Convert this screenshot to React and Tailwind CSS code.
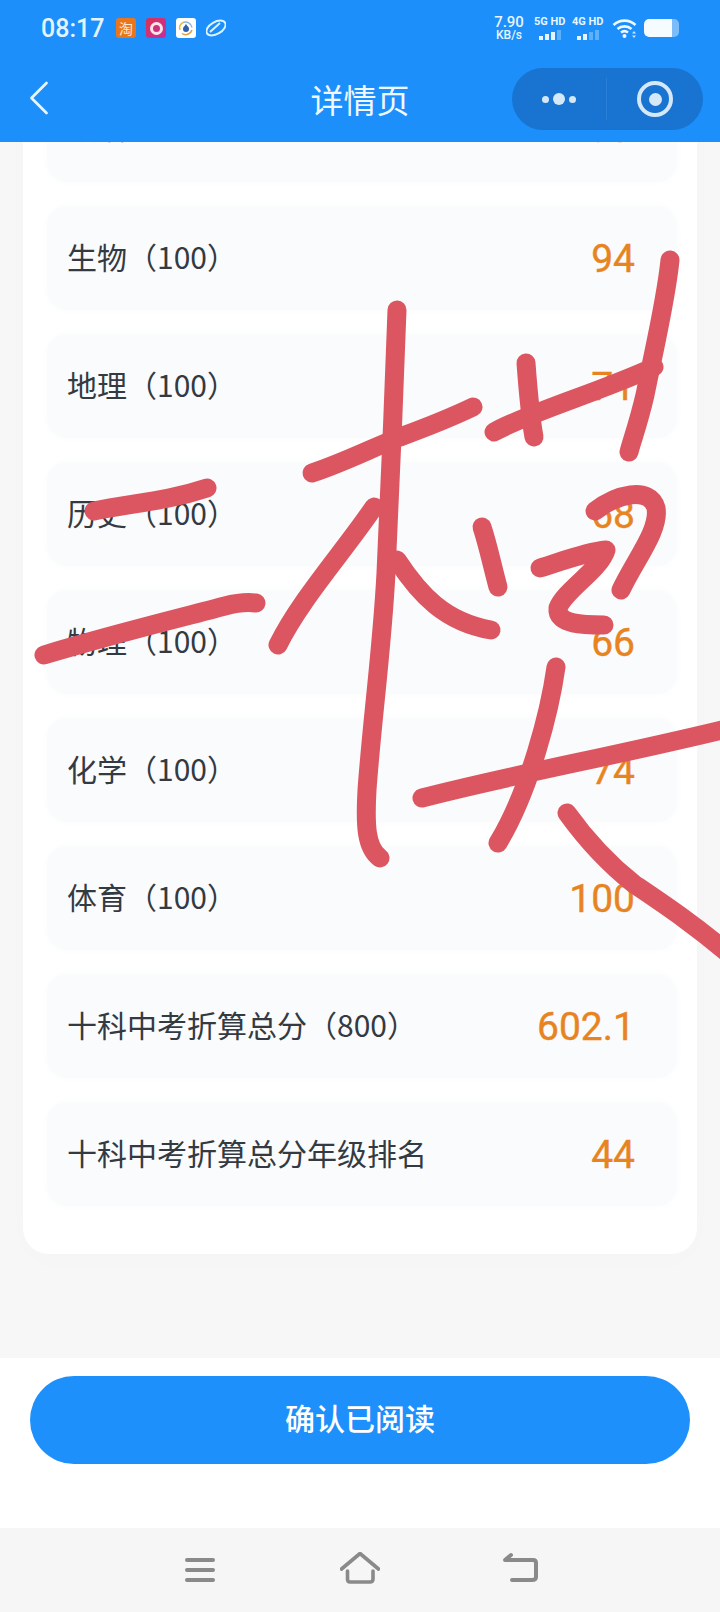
import { ChevronLeft } from 'lucide-react'

const cjk = '"Noto Sans CJK SC", "Noto Sans", sans-serif'

const rows = [
  { name: '政治', max: '100', score: '97' },
  { name: '生物', max: '100', score: '94' },
  { name: '地理', max: '100', score: '71' },
  { name: '历史', max: '100', score: '68' },
  { name: '物理', max: '100', score: '66' },
  { name: '化学', max: '100', score: '74' },
  { name: '体育', max: '100', score: '100' },
  { name: '十科中考折算总分', max: '800', score: '602.1' },
  { name: '十科中考折算总分年级排名', score: '44' },
]

function SignalBars({ lit }) {
  const heights = ['h-[4px]', 'h-[6px]', 'h-[8px]', 'h-[10px]']
  return (
    <div className="flex items-end justify-center gap-[2px] h-[10px]">
      {heights.map((h, i) => (
        <span key={h} className={`w-[4px] ${h} ${i < lit ? 'bg-[#e6f4ff]' : 'bg-[#5fb0fb]'}`} />
      ))}
    </div>
  )
}

function StatusBar() {
  return (
    <div className="h-[56px] flex items-center justify-between pl-[41px] pr-[41px]">
      <div className="flex items-center">
        <span className="text-[25px] leading-none font-medium text-[#e4f4ff] font-['Roboto'] w-[75px]">08:17</span>
        <div className="flex items-center gap-[10px]">
          <div className="w-[20px] h-[20px] rounded-[3px] bg-[#e8761f] flex items-center justify-center text-[14px] leading-none text-[#ffe9d0]" style={{ fontFamily: cjk }}>淘</div>
          <div className="w-[20px] h-[20px] rounded-[3px] bg-gradient-to-br from-[#d8304f] to-[#c62aa0] flex items-center justify-center">
            <div className="w-[13px] h-[13px] rounded-full border-[3px] border-[#fbe3e8]" />
          </div>
          <div className="w-[20px] h-[20px] rounded-[3px] bg-white flex items-center justify-center">
            <svg width="18" height="18" viewBox="0 0 18 18" fill="none">
              <path d="M3 11a6.500 6.500 0 0 1 3-7.500" stroke="#e3c23c" strokeWidth="1.500" />
              <path d="M6 3.500a6.500 6.500 0 0 1 9 5" stroke="#8fb4d8" strokeWidth="1.500" />
              <path d="M15 11a6.500 6.500 0 0 1-10 3.500" stroke="#d9a03c" strokeWidth="1.500" />
              <circle cx="9" cy="10" r="3" fill="#2f5fb0" />
              <path d="M9 5l2 3H7z" fill="#2f5fb0" />
            </svg>
          </div>
          <svg width="20" height="20" viewBox="0 0 20 20" fill="none">
            <ellipse cx="10" cy="10" rx="10.500" ry="6" transform="rotate(-30 10 10)" stroke="#dff3ff" strokeWidth="2" />
            <path d="M4 14L14 5" stroke="#dff3ff" strokeWidth="2" />
          </svg>
        </div>
      </div>
      <div className="flex items-center text-[#e8f5ff] font-['Roboto']">
        <div className="flex flex-col items-center w-[32px] mr-[9px] font-medium">
          <span className="text-[15px] leading-[14px]">7.90</span>
          <span className="text-[12px] leading-[12px]">KB/s</span>
        </div>
        <div className="flex flex-col w-[32px] mr-[6px] font-bold">
          <span className="text-[11px] leading-[12px] whitespace-nowrap mb-[2px]">5G HD</span>
          <SignalBars lit={3} />
        </div>
        <div className="flex flex-col w-[32px] mr-[8px] font-bold">
          <span className="text-[11px] leading-[12px] whitespace-nowrap mb-[2px]">4G HD</span>
          <SignalBars lit={2} />
        </div>
        <svg width="26" height="22" viewBox="0 0 26 22" fill="none" className="mr-[6px]">
          <path d="M1.500 8a16 16 0 0 1 22 0" stroke="#eef8ff" strokeWidth="2.600" />
          <path d="M5.500 12a10.500 10.500 0 0 1 14 0" stroke="#eef8ff" strokeWidth="2.600" />
          <path d="M9 15.500a5.500 5.500 0 0 1 7 0" stroke="#eef8ff" strokeWidth="2.600" />
          <circle cx="12.500" cy="19" r="2" fill="#eef8ff" />
          <path d="M22 14l2 2.500h-4zM22 21l2-2.500h-4z" fill="#cfe8ff" />
        </svg>
        <div className="w-[35px] h-[18px] rounded-[5px] bg-[#7dbcf8] overflow-hidden">
          <div className="w-[28px] h-full bg-[#f5fbff] rounded-l-[5px]" />
        </div>
      </div>
    </div>
  )
}

function Header() {
  return (
    <header className="relative z-10 h-[142px] bg-[#1c8ffb] text-white shrink-0">
      <StatusBar />
      <div className="relative h-[86px] flex items-start">
        <ChevronLeft size={60} strokeWidth={1.100} className="absolute left-[9px] top-[12px] text-[#e8f5ff]" />
        <h1 className="w-full text-center text-[33px] leading-[86px] font-normal text-[#f0f8ff]" style={{ fontFamily: cjk }}>详情页</h1>
        <div className="absolute left-[512px] top-[12px] w-[191px] h-[62px] rounded-full bg-[#1874d0] flex items-center">
          <div className="w-[95px] h-[42px] flex items-center justify-center gap-[4px] border-r border-[#2a80d6]">
            <span className="w-[7px] h-[7px] rounded-full bg-[#d5e8f8]" />
            <span className="w-[12px] h-[12px] rounded-full bg-[#d5e8f8]" />
            <span className="w-[7px] h-[7px] rounded-full bg-[#d5e8f8]" />
          </div>
          <div className="flex-1 flex items-center justify-center">
            <div className="w-[36px] h-[36px] rounded-full border-[4px] border-[#d5e8f8] flex items-center justify-center">
              <span className="w-[13px] h-[13px] rounded-full bg-[#d5e8f8]" />
            </div>
          </div>
        </div>
      </div>
    </header>
  )
}

function ScoreRow({ row, first }) {
  return (
    <div className={`${first ? 'h-[108px]' : 'h-[104px]'} rounded-[20px] bg-[#fafbfd] shadow-[0_0_8px_#fafbfd] flex items-center justify-between pl-[20px] pr-[42px]`}>
      <span className="mb-[4px] text-[30px] leading-none text-[#343a42] whitespace-nowrap" style={{ fontFamily: cjk }}>
        {row.name}
        {row.max && <>（{row.max}）</>}
      </span>
      <span className="mt-[3px] text-[39px] leading-none font-normal text-[#e8841f] font-['Roboto'] [-webkit-text-stroke:0.4px_#e8841f]">{row.score}</span>
    </div>
  )
}

// handwriting scribbled across the screenshot
const strokes = [
  'M94 511C130 503 165 502 207 488',
  'M44 655C110 635 180 618 225 606C240 602 248 602 256 603',
  'M312 473C345 462 372 448 400 437C430 426 450 418 473 407',
  'M397 310C394 400 390 480 386 573C382 650 372 720 367 790C365 825 366 848 380 858',
  'M374 507C345 550 300 600 278 645',
  'M397 560C420 595 445 622 491 630',
  'M494 432C530 412 600 392 654 367',
  'M526 363C528 390 530 415 534 437',
  'M670 260C666 300 655 345 645 395C638 425 632 440 629 452',
  'M482 527C488 545 492 565 498 587',
  'M595 511C615 495 650 485 656 508C660 530 635 560 621 590',
  'M540 568C560 562 585 552 606 550C600 570 565 590 558 608C556 625 585 625 604 625',
  'M422 798C510 775 620 755 730 728',
  'M556 667C550 710 530 790 498 843',
  'M567 813C590 845 610 865 634 884C665 905 695 925 730 955',
]

function Scribble() {
  return (
    <svg width="720" height="1612" viewBox="0 0 720 1612" fill="none" className="absolute left-0 top-0 z-20 pointer-events-none">
      {strokes.map(d => (
        <path key={d} d={d} stroke="#dc5661" strokeWidth="19" strokeLinecap="round" strokeLinejoin="round" />
      ))}
    </svg>
  )
}

function NavBar() {
  return (
    <nav className="h-[84px] bg-[#f6f6f6] shrink-0 relative">
      <div className="absolute left-[185px] top-[30px] w-[30px] h-[24px] flex flex-col justify-between">
        <span className="h-[4px] rounded-full bg-[#8a8a8a]" />
        <span className="h-[4px] rounded-full bg-[#8a8a8a]" />
        <span className="h-[4px] rounded-full bg-[#8a8a8a]" />
      </div>
      <svg width="40" height="32" viewBox="0 0 40 32" fill="none" stroke="#8a8a8a" strokeWidth="3.600" strokeLinecap="round" strokeLinejoin="round" className="absolute left-[340px] top-[24px]">
        <path d="M1.500 17L20 1.500L38.500 17" />
        <path d="M7.500 19V27C7.500 29 8.500 30 10 30H30C32 30 33 29 33 27V19" />
      </svg>
      <svg width="36" height="32" viewBox="0 0 36 32" fill="none" stroke="#8a8a8a" strokeWidth="4" strokeLinecap="round" strokeLinejoin="round" className="absolute left-[503px] top-[24px]">
        <path d="M9 28H29C32 28 33 27 33 25V11C33 9 32 8 30 8H2L8 3" />
      </svg>
    </nav>
  )
}

export default function App() {
  return (
    <div className="relative w-[720px] h-[1612px] overflow-hidden flex flex-col bg-[#f7f7f7]" style={{ fontFamily: cjk }}>
      <Header />
      <main className="flex-1 overflow-hidden pl-[23px] pr-[23px]">
        <div className="-mt-[68px] bg-white rounded-b-[26px] pl-[24px] pr-[20px] pb-[48px] flex flex-col gap-[24px] shadow-[0_8px_30px_rgba(0,0,0,0.01)]">
          {rows.map((row, i) => (
            <ScoreRow key={row.name} row={row} first={i === 0} />
          ))}
        </div>
      </main>
      <footer className="h-[170px] bg-white shrink-0 px-[30px] pt-[18px]">
        <button className="w-full h-[88px] rounded-full bg-[#1e90fb] text-white text-[30px] leading-none font-medium pb-[6px]" style={{ fontFamily: cjk }}>确认已阅读</button>
      </footer>
      <NavBar />
      <Scribble />
    </div>
  )
}
